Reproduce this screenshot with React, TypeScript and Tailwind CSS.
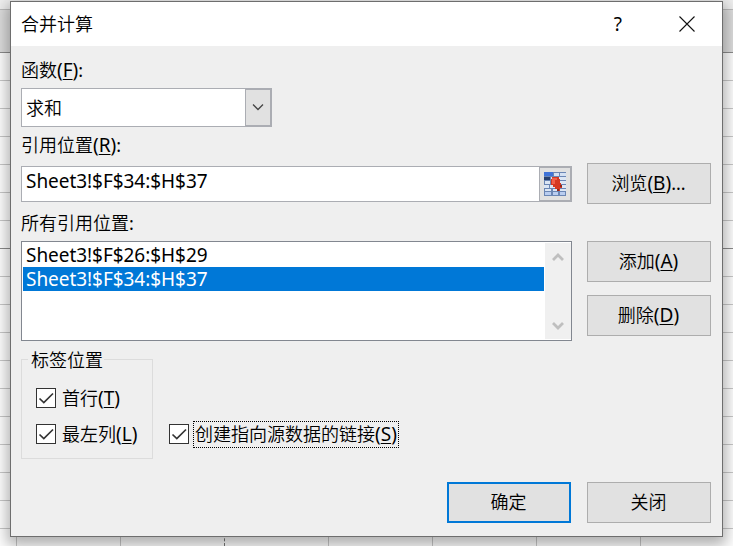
import React from "react";

const rowLines = Array.from({ length: 17 }, (_, i) => i);
const cols = ["a", "b", "c", "d", "e", "f", "g"];

function Sheet() {
  return (
    <div className="h-[546px] w-[733px] overflow-hidden bg-white">
      <div className="h-[10px] border-b border-[#bcbcbc] bg-[#f0f0f0]" />
      <div className="h-[43px] border-b border-[#8c8c8c] bg-[#dedede]" />
      {rowLines.map((i) => (
        <div
          key={i}
          className={
            i === 6
              ? "h-[28px] border-b border-[#8c8c8c]"
              : "h-[28px] border-b border-[#c9c9c9]"
          }
        />
      ))}
      <div className="flex h-[17px]">
        <div className="w-[17px] shrink-0 border-r border-[#c9c9c9]" />
        {cols.map((c) => (
          <div
            key={c}
            className={
              c === "b"
                ? "w-[104px] shrink-0 border-r border-dashed border-[#777777]"
                : "w-[104px] shrink-0 border-r border-[#c9c9c9]"
            }
          />
        ))}
      </div>
    </div>
  );
}

function Key({ k }: { k: string }) {
  return (
    <span className="text-[19px] font-normal leading-[0]">
      (<span className="underline decoration-1 underline-offset-[2px]">{k}</span>)
    </span>
  );
}

function Button({ children, primary }: { children: React.ReactNode; primary?: boolean }) {
  return (
    <button
      className={
        primary
          ? "flex h-[41px] w-[124px] items-center justify-center border-2 border-[#0078d7] bg-[#e1e1e1] pb-[2px] pr-px"
          : "flex h-[41px] w-[124px] items-center justify-center border border-[#adadad] bg-[#e1e1e1] pb-[2px] pr-px"
      }
    >
      <span className="whitespace-nowrap">{children}</span>
    </button>
  );
}

function Check({ children, focused }: { children: React.ReactNode; focused?: boolean }) {
  return (
    <div className="flex h-[27px] items-center">
      <span
        className={
          focused
            ? "mb-[2px] flex h-5 w-5 shrink-0 items-center justify-center border border-[#333333] bg-white"
            : "flex h-5 w-5 shrink-0 items-center justify-center border border-[#333333] bg-white"
        }
      >
        <svg width="18" height="18" viewBox="0 0 18 18" fill="none">
          <path d="M2.5 9.5 L6.8 13.5 L16 4.5" stroke="#333" strokeWidth="1.7" />
        </svg>
      </span>
      <span
        className={
          focused
            ? "ml-[4px] flex h-[27px] w-[206px] items-center whitespace-nowrap border border-dotted border-black pb-[2px] pl-px"
            : "ml-[6px] whitespace-nowrap"
        }
      >
        <span>{children}</span>
      </span>
    </div>
  );
}

function RangeIcon() {
  return (
    <svg width="22" height="24" viewBox="0 0 22 24" shapeRendering="crispEdges">
      <rect width="22" height="24" fill="#6b86b4" />
      <rect width="9" height="4" fill="#3f73d8" />
      <path d="M10 1h5v3h-5zM16 1h6v3h-6z" fill="#d5e1f3" />
      <path d="M0 5h6v3H0z" fill="#27406f" />
      <path d="M7 5h7v3H7zM15 5h7v3h-7zM1 9h5v3H1zM7 9h7v3H7zM16 9h6v3h-6zM0 13h5v3H0zM6 13h7v3H6zM15 13h7v3h-7zM1 17h6v2H1zM9 17h5v2H9zM16 17h6v2h-6z" fill="#dce6f4" />
      <path d="M1 20h6v3H1zM9 20h5v3H9zM16 20h5v3h-5z" fill="#b9cdf0" />
      <path d="M8 5h7v2h1v4h1v3h1v2h-2v3h-3v-2h-2v-2H9v-2H7V7h1z" fill="#d53822" />
      <path d="M8 6h5v2h-2v4H8z" fill="#f0604a" />
      <path d="M16 13h2v2h-2zM13 17h2v2h-2z" fill="#922719" />
    </svg>
  );
}

export default function App() {
  return (
    <div className="relative h-[546px] w-[733px] overflow-hidden font-['Noto_Sans','Noto_Sans_CJK_SC',sans-serif] text-[18px] font-[350] leading-[24px] text-black">
      <Sheet />
      <div className="absolute left-[10px] top-px flex h-[536px] w-[713px] flex-col border border-[#6e6e6e] bg-[#efefef] shadow-[0_5px_14px_3px_rgba(0,0,0,0.32)]">
        <header className="flex h-[44px] shrink-0 items-center bg-white pb-px pl-[10px]">
          <span>合并计算</span>
          <span className="ml-auto mr-[57px] text-[19px] font-normal">?</span>
          <svg className="mr-[27px]" width="16" height="16" viewBox="0 0 16 16">
            <path d="M.5.5l15 15M15.5.5l-15 15" stroke="#111" strokeWidth="1.1" />
          </svg>
        </header>

        <main className="flex flex-col pl-[10px]">
          <label className="mt-[12px] h-[24px]">
            函数<Key k="F" />
            <span className="font-normal">:</span>
          </label>
          <div className="mt-[6px] flex h-[39px] w-[251px] border border-[#abadb3] bg-white">
            <span className="flex flex-1 items-center pl-1">求和</span>
            <span className="flex w-[26px] items-center justify-center border border-r border-[#abadb3] bg-[#e1e1e1] pb-[2px]">
              <svg width="12" height="8" viewBox="0 0 12 8" fill="none">
                <path d="M1 1.5L6 6.5L11 1.5" stroke="#444" strokeWidth="1.3" />
              </svg>
            </span>
          </div>

          <div className="flex gap-[15px]">
            <div className="w-[551px]">
              <div className="mt-[6px] h-[25px]">
                引用位置<Key k="R" />
                <span className="font-normal">:</span>
              </div>
              <div className="mt-[8px] flex h-[36px] border border-[#abadb3] bg-white">
                <span className="flex-1 pl-1 pt-[2px] text-[19px] font-normal tracking-[-0.05px]">Sheet3!$F$34:$H$37</span>
                <span className="flex w-[32px] items-center justify-center border border-[#abadb3] bg-[#e1e1e1]">
                  <RangeIcon />
                </span>
              </div>
              <div className="mt-[9px] h-[25px]">
                所有引用位置<span className="font-normal">:</span>
              </div>
              <div className="mt-[5px] flex h-[100px] border border-[#828790] bg-white py-px pl-px">
                <div className="w-[521px] text-[19px] font-normal tracking-[-0.05px]">
                  <div className="h-[24px] pl-[3px]">Sheet3!$F$26:$H$29</div>
                  <div className="h-[24px] bg-[#0078d7] pl-[3px] text-white">Sheet3!$F$34:$H$37</div>
                </div>
                <div className="ml-px flex flex-1 flex-col items-center justify-between bg-[#f0f0f0] pb-[8px] pt-[9px]">
                  <svg width="12" height="10" viewBox="0 0 12 10" fill="none">
                    <path d="M1 8L6 3L11 8" stroke="#bfbfbf" strokeWidth="2.8" />
                  </svg>
                  <svg width="12" height="10" viewBox="0 0 12 10" fill="none">
                    <path d="M1 2L6 7L11 2" stroke="#bfbfbf" strokeWidth="2.8" />
                  </svg>
                </div>
              </div>
            </div>
            <div className="flex flex-col pt-[36px]">
              <Button>
                浏览<Key k="B" />
                <span className="font-normal">...</span>
              </Button>
              <div className="mt-[37px] flex flex-col gap-[13px]">
                <Button>
                  添加<Key k="A" />
                </Button>
                <Button>
                  删除<Key k="D" />
                </Button>
              </div>
            </div>
          </div>

          <div className="mt-[18px] flex items-start">
            <section className="h-[100px] w-[132px] border border-[#dcdcdc] pl-[14px]">
              <div className="-ml-[8px] -mt-[12px] flex h-[24px] w-[76px] items-center bg-[#efefef] pb-px pl-[3px]">
                <span>标签位置</span>
              </div>
              <div className="mt-[12px] flex flex-col gap-[9px]">
                <Check>
                  首行<Key k="T" />
                </Check>
                <Check>
                  最左列<Key k="L" />
                </Check>
              </div>
            </section>
            <div className="ml-[16px] mt-[62px]">
              <Check focused>
                创建指向源数据的链接<Key k="S" />
              </Check>
            </div>
          </div>

          <div className="mt-[23px] flex gap-[16px] pl-[426px]">
            <Button primary>确定</Button>
            <Button>关闭</Button>
          </div>
        </main>
      </div>
    </div>
  );
}
